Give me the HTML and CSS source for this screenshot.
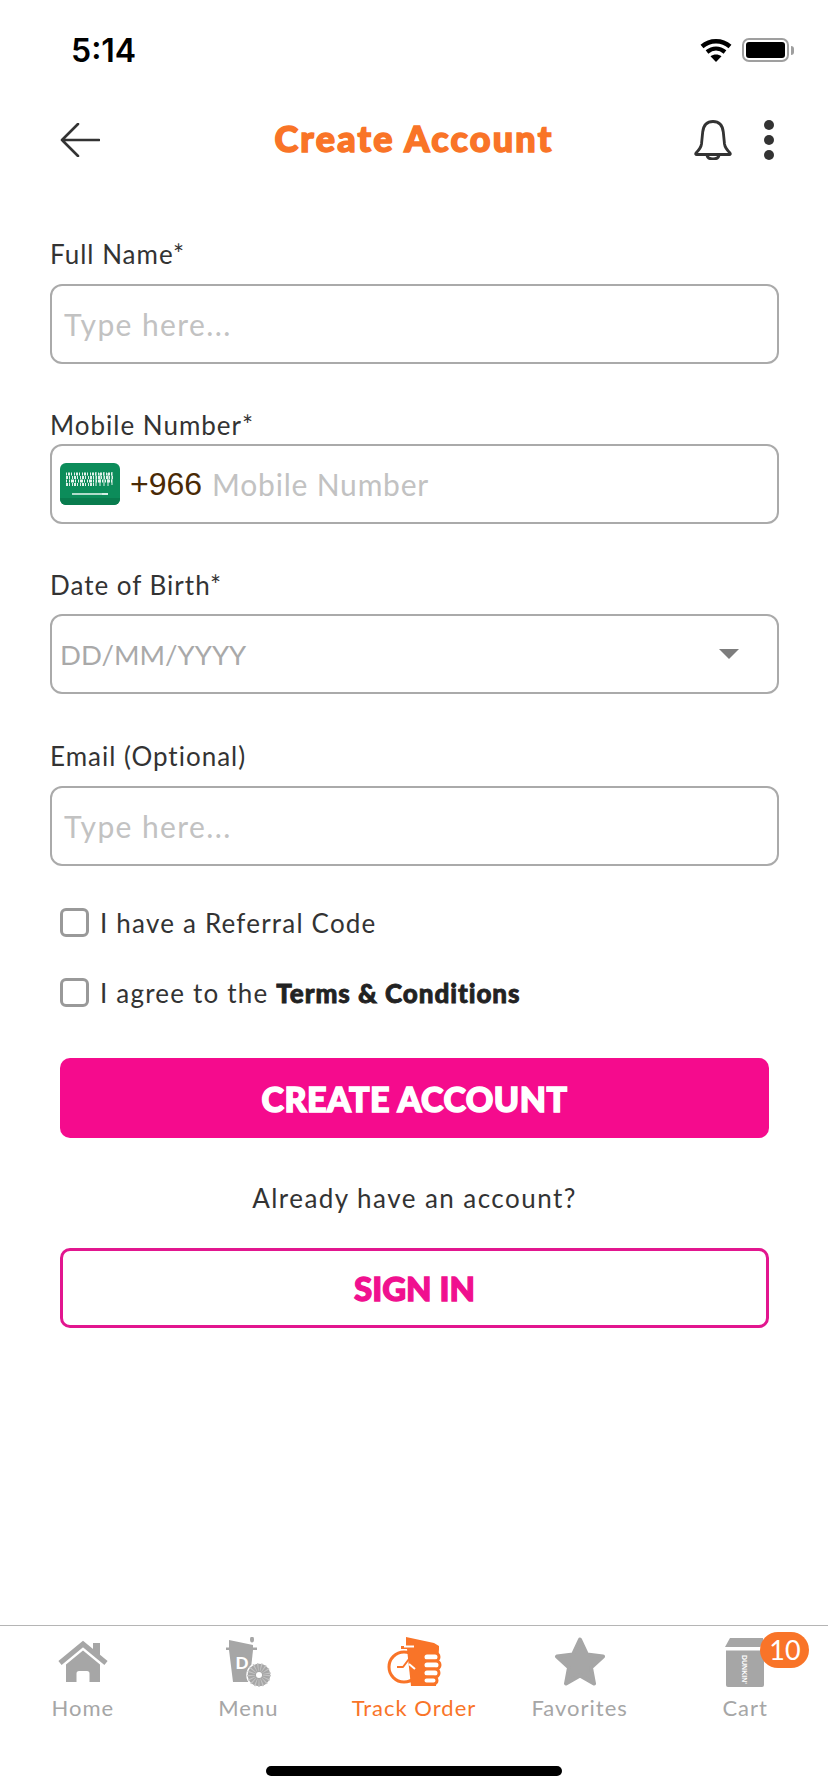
FILE: index.html
```html
<!DOCTYPE html>
<html lang="en">
<head>
<meta charset="utf-8">
<title>Create Account</title>
<link rel="stylesheet" href="styles.css">
</head>
<body>
<div class="screen">
  <header class="status">
    <span class="time">5:14</span>
    <div class="status-icons">
      <svg class="wifi" viewBox="0 0 32 24" width="32" height="24"><path d="M2 8.500C10 1.500 22 1.500 30 8.500" class="wifi-arc" stroke-width="4.400"/><path d="M7 14C12.500 9.500 19.500 9.500 25 14" class="wifi-arc" stroke-width="4.200"/><path d="M16 24l-5.500-5.800c3.200-2.400 7.800-2.400 11 0z" class="wifi-dot"/></svg>
      <div class="battery"><div class="battery-fill"></div></div>
      <div class="battery-nub"></div>
    </div>
  </header>

  <nav class="nav">
    <svg class="back" viewBox="0 0 40 34" width="40" height="34"><path d="M39 17H2M18 1L2 17l16 16" class="line-icon" stroke-width="2.600"/></svg>
    <h1 class="title">Create Account</h1>
    <div class="nav-right">
      <svg class="bell" viewBox="0 0 38 40" width="38" height="40"><path d="M2 33c3-3 5-5 5.500-9l1.200-12C9.500 5 13.500 1.500 19 1.500S28.500 5 29.300 12l1.200 12c.5 4 2.500 6 5.500 9 .6.800.3 1.500-.7 1.500H2.700c-1 0-1.300-.7-.7-1.500z" class="line-icon" stroke-width="2.800"/><path d="M13 35c.3 3 3 4 6 4s5.700-1 6-4" class="line-icon" stroke-width="2.800"/></svg>
      <div class="dots"><i></i><i></i><i></i></div>
    </div>
  </nav>

  <main class="form">
    <div class="field">
      <label class="label label-a">Full Name*</label>
      <div class="box"><span class="ph">Type here...</span></div>
    </div>
    <div class="field">
      <label class="label label-b">Mobile Number*</label>
      <div class="box box-phone">
        <svg class="flag" viewBox="0 0 60 42" width="60" height="42">
          <rect width="60" height="42" rx="6" class="flag-bg"/>
          <path d="M0 35h60v1a6 6 0 0 1-6 6H6a6 6 0 0 1-6-6z" class="flag-band"/>
          <path d="M6 11H54" class="flag-row-a"/>
          <path d="M6 14.500H54" class="flag-row-b"/>
          <path d="M6 18H54" class="flag-row-c"/>
          <path d="M6 21.500H34" class="flag-row-b"/>
          <path d="M36 9v14M40 10v13M44 9v14M48 10v13M52 9v13" class="flag-strokes"/>
          <path d="M12 31h30" class="flag-sword"/>
          <path d="M42 30h6v2h-6z" class="flag-hilt"/>
        </svg>
        <span class="code">+966</span>
        <span class="ph ph-mobile">Mobile Number</span>
      </div>
    </div>
    <div class="field">
      <label class="label label-c">Date of Birth*</label>
      <div class="box box-select">
        <span class="ph-dark">DD/MM/YYYY</span>
        <svg class="caret" viewBox="0 0 20 10" width="20" height="10"><path d="M0 0h20L10 10z"/></svg>
      </div>
    </div>
    <div class="field field-email">
      <label class="label label-a">Email (Optional)</label>
      <div class="box"><span class="ph">Type here...</span></div>
    </div>

    <div class="check check-first"><span class="tick"></span><span>I have a Referral Code</span></div>
    <div class="check check-second"><span class="tick"></span><span>I agree to the <b class="chunky terms">Terms &amp; Conditions</b></span></div>

    <button class="btn btn-solid chunky" type="button">CREATE ACCOUNT</button>
    <p class="already">Already have an account?</p>
    <button class="btn btn-line chunky" type="button">SIGN IN</button>
  </main>

  <footer class="tabbar">
    <div class="tab">
      <svg class="tab-icon" viewBox="0 0 60 52" width="60" height="52">
        <path d="M13 45V27.500L30 13.500l17 14V45H36.500V36.500a2.500 2.500 0 0 0-2.500-2.500h-8a2.500 2.500 0 0 0-2.500 2.500V45z" class="fill-gray"/>
        <path d="M40 6h7v12h-7z" class="fill-gray"/>
        <path d="M7 26L30 7l23 19" class="roof"/>
      </svg>
      <span>Home</span>
    </div>
    <div class="tab">
      <svg class="tab-icon" viewBox="0 0 60 52" width="60" height="52">
        <path d="M11 3l24 5v3H11z" class="fill-gray"/>
        <ellipse cx="34" cy="2.500" rx="2" ry="3" class="fill-gray"/>
        <path d="M8 10.500h31v2.500H8z" class="fill-gray"/>
        <path d="M11 13h24l-3.500 32H15z" class="fill-gray"/>
        <text x="17.500" y="32" class="cup-d">D</text>
        <circle cx="41" cy="38" r="12" class="donut-ring"/>
        <circle cx="41" cy="38" r="8" class="donut-speck"/>
        <circle cx="41" cy="38" r="3" class="fill-white"/>
      </svg>
      <span>Menu</span>
    </div>
    <div class="tab tab-active">
      <svg class="tab-icon" viewBox="0 0 60 52" width="60" height="52">
        <circle cx="20" cy="30" r="15" class="clock"/>
        <path d="M13 30h6l6-8 7 6" class="clock-hand"/>
        <path d="M22 0l28 6 5 3v3H17V9h5z" class="fill-orange"/>
        <path d="M20 9.500h10" class="rim-line"/>
        <path d="M23 12h32l-3 37H27z" class="fill-orange"/>
        <path d="M25 27l6 5" class="rim-line"/>
        <rect x="39" y="16" width="16" height="8" rx="4" class="finger"/>
        <rect x="39" y="24" width="17" height="8" rx="4" class="finger"/>
        <rect x="39" y="32" width="16" height="8" rx="4" class="finger"/>
        <rect x="39" y="40" width="14" height="7" rx="3.500" class="finger"/>
      </svg>
      <span>Track Order</span>
    </div>
    <div class="tab">
      <svg class="tab-icon" viewBox="0 0 60 52" width="60" height="52">
        <path d="M30 2.500l7 15 16 2-12 11 3 16-14-8-14 8 3-16L7 19.500l16-2z" class="star"/>
      </svg>
      <span>Favorites</span>
    </div>
    <div class="tab">
      <svg class="tab-icon" viewBox="0 0 60 52" width="60" height="52">
        <path d="M15 1h33l1 9H10z" class="fill-gray"/>
        <path d="M11 13.500h38V48a2 2 0 0 1-2 2H13a2 2 0 0 1-2-2z" class="fill-gray"/>
        <path d="M10 12h33c2 0 4-1 4-5" class="bag-fold"/>
        <text x="0" y="0" transform="translate(27 18) rotate(90)" class="bag-text">DUNKIN'</text>
      </svg>
      <span>Cart</span>
      <span class="badge">10</span>
    </div>
    <div class="home-bar"></div>
  </footer>
</div>
</body>
</html>
```

FILE: styles.css
```css
* { box-sizing: border-box; }
html, body { margin: 0; padding: 0; background: #fff; }
body { font-family: "Lato", "Open Sans", sans-serif; color: #333; }
.screen { width: 828px; height: 1792px; display: flex; flex-direction: column; overflow: hidden; }

.status { height: 88px; flex: none; display: flex; justify-content: space-between; align-items: center; padding: 12px 34px 0 71px; }
.time { font-family: "Inter", sans-serif; font-weight: 600; font-size: 32px; color: #000; letter-spacing: 0; }
.status-icons { display: flex; align-items: center; }
.wifi { margin-right: 10px; }
.wifi-arc { fill: none; stroke: #000; }
.wifi-dot { fill: #000; }
.battery { width: 47px; height: 24px; border: 2px solid #9f9f9f; border-radius: 7px; padding: 2px; }
.battery-fill { width: 100%; height: 100%; background: #000; border-radius: 3px; }
.battery-nub { width: 3px; height: 9px; background: #9f9f9f; border-radius: 0 3px 3px 0; margin-left: 2px; }

.nav { height: 104px; flex: none; position: relative; display: flex; justify-content: space-between; align-items: center; padding: 0 54px 0 60px; }
.line-icon { fill: none; stroke: #333; stroke-linecap: round; stroke-linejoin: round; }
.title { position: absolute; left: 0; right: 0; top: 28px; text-align: center; margin: 0; font-size: 36px; line-height: 44px; font-weight: 900; color: #f97427; -webkit-text-stroke: 1.500px #f97427; letter-spacing: 2.200px; }
.nav-right { display: flex; align-items: center; gap: 32px; }
.dots { display: flex; flex-direction: column; gap: 5px; }
.dots i { display: block; width: 10px; height: 10px; border-radius: 50%; background: #333; }

.form { flex: 1; padding: 47px 49px 0 50px; display: flex; flex-direction: column; }
.field { display: flex; flex-direction: column; }
.label { font-size: 26px; line-height: 30px; color: #333; letter-spacing: 1px; }
.label-a { margin-bottom: 15px; }
.label-b { margin-top: 46px; margin-bottom: 4px; }
.label-c { margin-top: 46px; margin-bottom: 14px; }
.field-email { margin-top: 47px; }
.box { height: 80px; border: 2px solid #aaa; border-radius: 12px; display: flex; align-items: center; padding: 0 12px; font-size: 30px; }
.box-phone { padding-left: 8px; }
.box-select { padding: 0 38px 0 8px; justify-content: space-between; }
.ph { color: #c2c2c2; letter-spacing: 1.400px; }
.ph-mobile { letter-spacing: 0.800px; }
.ph-dark { color: #a9a9a9; font-size: 27.500px; }
.flag { flex: none; margin-right: 10px; }
.flag-bg { fill: #0c8c5a; }
.flag-band { fill: #097c4e; }
.flag-row-a { fill: none; stroke: #e4f2ec; stroke-width: 3; stroke-dasharray: 1 1 2 1 1 2; }
.flag-row-b { fill: none; stroke: #dff0e9; stroke-width: 3; stroke-dasharray: 2 1 1 2 1 1; }
.flag-row-c { fill: none; stroke: #e9f6f0; stroke-width: 3; stroke-dasharray: 1 2 1 1 3 1; }
.flag-strokes { fill: none; stroke: #e4f2ec; stroke-width: 1; }
.flag-sword { fill: none; stroke: #e9f6f0; stroke-width: 1.500; }
.flag-hilt { fill: #d5eee4; }
.code { color: #4a2a05; font-family: "Liberation Sans", sans-serif; margin-right: 10px; font-size: 32px; }

.check { display: flex; align-items: center; gap: 11px; margin-left: 10px; height: 29px; font-size: 26px; color: #333; letter-spacing: 1.200px; }
.check-first { margin-top: 42px; }
.check-second { margin-top: 41px; }
.tick { width: 29px; height: 29px; border: 3px solid #999; border-radius: 6px; flex: none; }
.chunky { font-family: "Lato", sans-serif; font-weight: 900; }
.terms { color: #222; -webkit-text-stroke: 0.800px #222; letter-spacing: 0.950px; }

.btn { display: block; width: 709px; margin-left: 10px; padding: 0; font-size: 34px; letter-spacing: 0.500px; }
.btn-solid { height: 80px; margin-top: 51px; background: #f50b8d; border: 0; border-radius: 10px; color: #fff; -webkit-text-stroke: 1.500px #fff; }
.btn-line { height: 80px; background: #fff; border: 3px solid #e2168f; border-radius: 10px; color: #f0108f; font-size: 33px; letter-spacing: 0; -webkit-text-stroke: 1.300px #f0108f; }
.already { margin: 45px 0 35px 10px; width: 709px; text-align: center; font-size: 26px; line-height: 30px; color: #333; letter-spacing: 1.450px; }

.tabbar { height: 167px; flex: none; position: relative; border-top: 1px solid #b5b5b5; display: grid; grid-template-columns: repeat(5, 1fr); padding-top: 11px; align-items: start; }
.tab { position: relative; display: flex; flex-direction: column; align-items: center; font-size: 22px; line-height: 30px; color: #a6a6a6; letter-spacing: 1px; }
.tab-active { color: #f97428; }
.tab-icon { display: block; margin-bottom: 4px; }
.fill-gray { fill: #a6a6a6; }
.fill-white { fill: #fff; }
.fill-orange { fill: #f97428; }
.roof { fill: none; stroke: #a6a6a6; stroke-width: 5; stroke-linejoin: miter; }
.cup-d { fill: #fff; font-family: "Lato", sans-serif; font-weight: 900; font-size: 17px; letter-spacing: 0; }
.donut-ring { fill: #a6a6a6; stroke: #fff; stroke-width: 1.500; }
.donut-speck { fill: none; stroke: #c4c4c4; stroke-width: 8; stroke-dasharray: 1 2; }
.clock { fill: #fff; stroke: #f97428; stroke-width: 3; }
.clock-hand { fill: none; stroke: #f97428; stroke-width: 2; stroke-linejoin: round; }
.rim-line { fill: none; stroke: #fff; stroke-width: 2; }
.finger { fill: #fff; stroke: #f97428; stroke-width: 3; }
.star { fill: #a6a6a6; stroke: #a6a6a6; stroke-width: 4; stroke-linejoin: round; }
.bag-fold { fill: none; stroke: #fff; stroke-width: 1.800; }
.bag-text { fill: #fff; font-family: "Liberation Sans", sans-serif; font-weight: 700; font-size: 7px; letter-spacing: 0; }
.badge { position: absolute; left: 98px; top: -5px; width: 49px; height: 36px; border-radius: 18px; background: #f97428; color: #fff; font-size: 27px; line-height: 36px; text-align: center; letter-spacing: 0; }
.home-bar { position: absolute; left: 266px; top: 140px; width: 296px; height: 10px; border-radius: 5px; background: #000; }
.caret { fill: #7d7d7d; }
```
